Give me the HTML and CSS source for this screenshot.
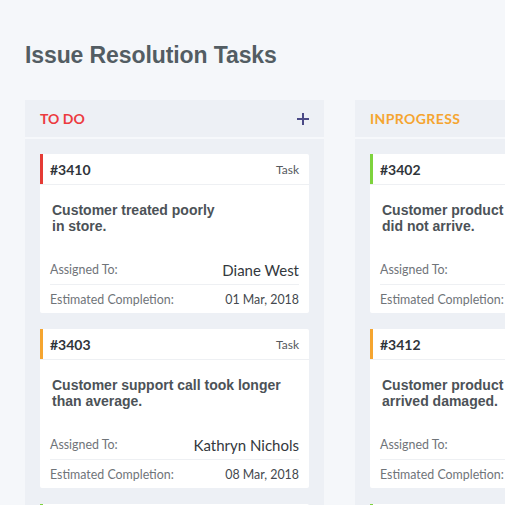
FILE: index.html
```html
<!DOCTYPE html>
<html>
<head>
<meta charset="utf-8">
<link rel="stylesheet" href="styles.css">
</head>
<body>
<h1 class="title">Issue Resolution Tasks</h1>
<div class="board">
  <section class="column">
    <div class="col-head">
      <span class="col-name todo">TO DO</span>
      <svg class="plus" width="14" height="14" viewBox="0 0 14 14"><path d="M7 1v12M1 7h12" stroke="#4b4a86" stroke-width="2" fill="none"/></svg>
    </div>
    <div class="col-body">
      <article class="card red">
        <div class="card-head"><span class="id">#3410</span><span class="type">Task</span></div>
        <p class="desc">Customer treated poorly<br>in store.</p>
        <div class="row"><span class="label">Assigned To:</span><span class="name">Diane West</span></div>
        <div class="row"><span class="label">Estimated Completion:</span><span class="date">01 Mar, 2018</span></div>
      </article>
      <article class="card orange">
        <div class="card-head"><span class="id">#3403</span><span class="type">Task</span></div>
        <p class="desc">Customer support call took longer<br>than average.</p>
        <div class="row"><span class="label">Assigned To:</span><span class="name">Kathryn Nichols</span></div>
        <div class="row"><span class="label">Estimated Completion:</span><span class="date">08 Mar, 2018</span></div>
      </article>
      <article class="card green">
        <div class="card-head"></div>
      </article>
    </div>
  </section>
  <section class="column">
    <div class="col-head">
      <span class="col-name prog">INPROGRESS</span>
      <svg class="plus" width="14" height="14" viewBox="0 0 14 14"><path d="M7 1v12M1 7h12" stroke="#4b4a86" stroke-width="2" fill="none"/></svg>
    </div>
    <div class="col-body">
      <article class="card green">
        <div class="card-head"><span class="id">#3402</span><span class="type">Task</span></div>
        <p class="desc">Customer product<br>did not arrive.</p>
        <div class="row"><span class="label">Assigned To:</span><span class="name">Kevin Moore</span></div>
        <div class="row"><span class="label">Estimated Completion:</span><span class="date">05 Mar, 2018</span></div>
      </article>
      <article class="card orange">
        <div class="card-head"><span class="id">#3412</span><span class="type">Task</span></div>
        <p class="desc">Customer product<br>arrived damaged.</p>
        <div class="row"><span class="label">Assigned To:</span><span class="name">Lisa Grant</span></div>
        <div class="row"><span class="label">Estimated Completion:</span><span class="date">10 Mar, 2018</span></div>
      </article>
      <article class="card green">
        <div class="card-head"></div>
      </article>
    </div>
  </section>
</div>
</body>
</html>
```
FILE: styles.css
```css
html, body {
  margin: 0;
  padding: 0;
  height: 505px;
  overflow: hidden;
}
body {
  background: #f5f7fa;
  font-family: Lato, "Open Sans", sans-serif;
  padding: 0 0 0 25px;
}
.title {
  margin: 0;
  padding-top: 42px;
  height: 60px;
  box-sizing: border-box;
  font-family: "Liberation Sans", Arial, sans-serif;
  font-weight: bold;
  font-size: 23px;
  line-height: 27px;
  color: #535d63;
  letter-spacing: -0.1px;
}
.board {
  display: flex;
  gap: 31px;
  padding-top: 40px;
}
.column {
  flex: 0 0 299px;
  background: #edf0f5;
}
.col-head {
  height: 37px;
  display: flex;
  align-items: center;
  justify-content: space-between;
  padding: 0 14px 0 15px;
  border-bottom: 2px solid #f6f8fb;
}
.col-name {
  font-weight: bold;
  font-size: 14px;
}
.todo { color: #ec3b3f; }
.prog { color: #f5a530; letter-spacing: 0.4px; }
.plus { display: block; margin-top: 1px; }
.col-body {
  padding: 15px;
  display: flex;
  flex-direction: column;
  gap: 16px;
}
.card {
  background: #fff;
  border-radius: 2px;
  padding: 0 10px;
  min-height: 30px;
}
.card-head {
  height: 30px;
  display: flex;
  align-items: center;
  justify-content: space-between;
  border-bottom: 1px solid #eef0f3;
  margin: 0 -10px;
  padding: 0 10px;
}
.red .card-head { box-shadow: inset 3px 0 0 0 #e53b35; }
.orange .card-head { box-shadow: inset 3px 0 0 0 #f5a530; }
.green .card-head { box-shadow: inset 3px 0 0 0 #7ed33d; }
.id {
  font-weight: bold;
  font-size: 14px;
  color: #30353a;
}
.type {
  font-size: 12px;
  color: #55595e;
}
.desc {
  margin: 0;
  padding: 17px 2px 21px;
  font-family: "Liberation Sans", Arial, sans-serif;
  font-weight: bold;
  font-size: 14px;
  line-height: 16px;
  color: #4c5257;
}
.row {
  height: 29px;
  display: flex;
  align-items: center;
  justify-content: space-between;
}
.row + .row {
  height: 28px;
  border-top: 1px solid #eef0f3;
}
.label {
  font-size: 12.4px;
  color: #6f7479;
}
.name {
  font-size: 15px;
  color: #33383d;
}
.date {
  font-size: 12.4px;
  color: #44494e;
}
```
